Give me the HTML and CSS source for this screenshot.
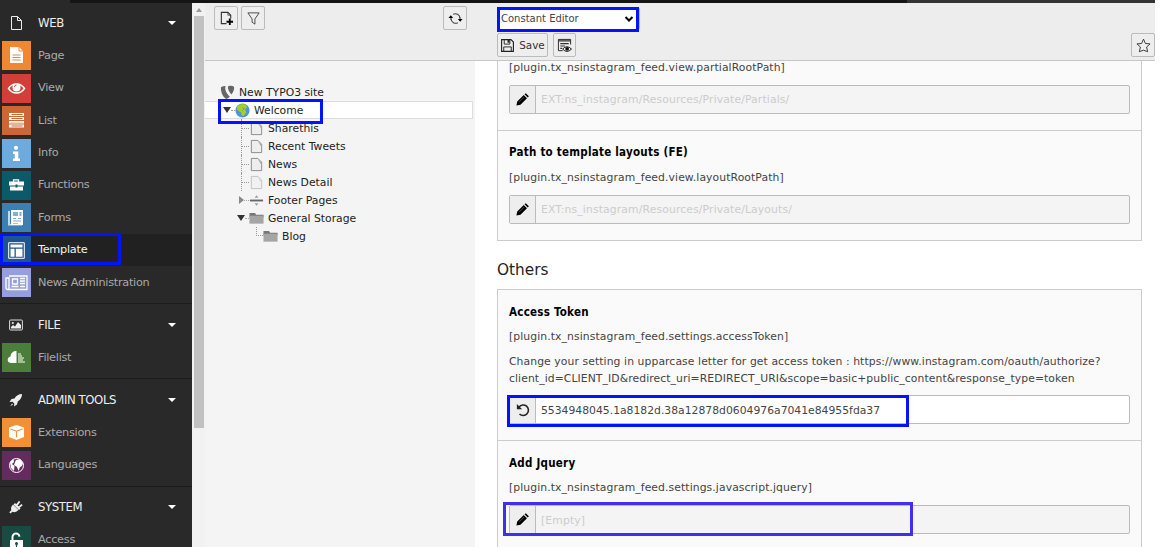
FILE: index.html
```html
<!DOCTYPE html>
<html lang="en">
<head>
<meta charset="utf-8">
<title>Template - Constant Editor</title>
<link rel="stylesheet" href="styles.css">
</head>
<body>
<div class="app">
  <div class="topbar"><span class="top-a"></span><span class="top-b"></span><span class="top-c"></span></div>
  <div class="main">
    <nav class="menu">
      <section class="group first">
        <h2 class="head"><svg class="hi" viewBox="0 0 16 16"><path d="M3.5 1.5h6l4 4v9h-10zM9.5 1.5v4h4" fill="none" stroke="#eee"/></svg><span>WEB</span><i class="caret"></i></h2>
        <a class="item"><svg class="ic page" viewBox="0 0 29 29"><path d="M8 6h9l4 4v12H8z" fill="#fff"/><path d="M17 6v4h4" fill="none" stroke="#ef8733"/><path d="M10.500 14h8M10.500 16.500h8M10.500 19h8" stroke="#ef8733"/></svg>Page</a>
        <a class="item"><svg class="ic view" viewBox="0 0 29 29"><path d="M6.500 14.500c4-6 12-6 16 0c-4 6-12 6-16 0z" fill="none" stroke="#fff" stroke-width="1.400"/><circle cx="14.500" cy="13.500" r="4" fill="#fff"/><path d="M12.500 13a2 2 0 0 1 2-2" stroke="#d13f38" fill="none"/></svg>View</a>
        <a class="item"><svg class="ic list" viewBox="0 0 29 29"><path d="M7 7h15v3H7zM7 11h15v3H7zM7 15h15v2.600H7zM7 18.600h15v3H7z" fill="#fff"/><path d="M9.500 8.500h11M9.500 12.500h11M9.500 20h11" stroke="#cb6736"/><path d="M9 16.300h12" stroke="#e6b294" stroke-width=".7"/></svg>List</a>
        <a class="item"><svg class="ic info" viewBox="0 0 29 29"><circle cx="14" cy="8.800" r="2.100" fill="#fff"/><path d="M11 12.500h5.300v7H18V22h-7v-2.500h1.800V15H11z" fill="#fff"/></svg>Info</a>
        <a class="item"><svg class="ic func" viewBox="0 0 29 29"><path d="M11.500 11V8.800h5V11" fill="none" stroke="#fff" stroke-width="1.300"/><path d="M7 10.500h15v4h-6.500v-1h-2v1H7zM8 15.500h5.500v1h2v-1h5.500v4H8z" fill="#fff"/></svg>Functions</a>
        <a class="item"><svg class="ic forms" viewBox="0 0 29 29"><path d="M6 8h2v13h12v1.500H6z" fill="#c6dbea"/><path d="M9 7h12v15H9z" fill="#fff"/><path d="M11 9h5v4h-5zM17.500 9h2v4h-2zM11 15h3v1h-3zM11 17.500h8v1h-8zM11 20h5v.8h-5zM16 15h3v1h-3z" fill="#83b0d2"/></svg>Forms</a>
        <a class="item active"><svg class="ic tmpl" viewBox="0 0 29 29"><path d="M6.700 6.700h15.600v15.600H6.700z" fill="none" stroke="#fff"/><path d="M8.500 8.500h12v3h-12zM8.500 12.800h4v8h-4zM13.800 12.800h6.700v8h-6.700z" fill="#fff"/></svg>Template</a>
        <a class="item"><svg class="ic news" viewBox="0 0 29 29"><path d="M7 8h18v13.500H6q-2 0-2-2V10h3v9.500q0 2-1 2" fill="none" stroke="#fff" stroke-width="1.300"/><path d="M10.500 11h5v5h-5zM9.500 18.500h7M18 10.500h5M18 13h5M18 15.500h5M18 18.500h5" fill="none" stroke="#fff" stroke-width="1.300"/></svg>News Administration</a>
      </section>
      <section class="group">
        <h2 class="head"><svg class="hi" viewBox="0 0 16 16"><rect x="1.600" y="3" width="12.800" height="10" rx="1" fill="none" stroke="#ddd"/><circle cx="4.800" cy="6" r="1.100" fill="#eee"/><path d="M3 11.500V10l2-2 2 1.500L10 5l3 3v3.500z" fill="#eee"/></svg><span>FILE</span><i class="caret"></i></h2>
        <a class="item"><svg class="ic files" viewBox="0 0 29 29"><path d="M14.500 8v12H9q-3.500-.5-3.300-3.500Q6 14 8.500 13.500 9 8 14.500 8z" fill="#fff"/><path d="M16 11h3M16 13h4M16 15h6M16 17h5M16 19h7" stroke="#fff" stroke-width="1.100"/></svg>Filelist</a>
      </section>
      <section class="group">
        <h2 class="head"><svg class="hi" viewBox="0 0 16 16"><path d="M14 2q-5 0-7.500 4.500L3.500 7 1.500 10l3-.3 1.800 1.800-.3 3 3-2 .8-3Q14 7 14 2zM4 11.500l-1.700 2.700L5 12.500z" fill="#eee"/></svg><span>ADMIN TOOLS</span><i class="caret"></i></h2>
        <a class="item"><svg class="ic ext" viewBox="0 0 29 29"><path d="M14.500 7l7.500 2.500v9.500l-7.500 3L7 19V9.500z" fill="#fff"/><path d="M8.500 11l6 2.200 6-2.200M14.500 13.200v6" stroke="#f29036" fill="none" stroke-width="1.100"/></svg>Extensions</a>
        <a class="item"><svg class="ic lang" viewBox="0 0 29 29"><circle cx="14.500" cy="14.500" r="7" fill="none" stroke="#fff"/><path d="M8 11l3.500-3 .5 3-2 2 2.500 2-.5 5-3-3zM14 9l4-1 3 4-1 3-2 1-1.500 4-1.500-4-3-2 1-3z" fill="#fff"/></svg>Languages</a>
      </section>
      <section class="group">
        <h2 class="head"><svg class="hi" viewBox="0 0 16 16"><path d="M5 5.500l5.500 5.500Q8 14 4.500 12.800L2.500 14.500l-1.200-1.200 2-2Q2.500 8 5 5.500zM5.500 5.500L7 4l5.500 5.500-1.500 1.500zM8 5.500L11 1.800l1.200 1.200L9.500 7zM10 8l3.500-3 1.200 1.200L11.500 9z" fill="#eee"/></svg><span>SYSTEM</span><i class="caret"></i></h2>
        <a class="item"><svg class="ic acc" viewBox="0 0 29 29"><path d="M10.500 15v-3.500a3.500 3.500 0 0 1 7-.8" fill="none" stroke="#fff" stroke-width="2"/><path d="M8 14h13v9H8z" fill="#fff"/><circle cx="14.500" cy="17.500" r="1.500" fill="#184b42"/><path d="M14.500 18v3" stroke="#184b42" stroke-width="1.200"/></svg>Access</a>
      </section>
    </nav>
    <div class="scroll"><span class="arrow"></span><span class="thumb"></span></div>
    <aside class="tree">
      <div class="tree-tools">
        <button class="btn sq"><svg viewBox="0 0 16 16"><path d="M8 13.500H2.500v-12h7l3 3V8" fill="none" stroke="#333" stroke-width="1.200"/><path d="M9.500 1.500v3h3" fill="none" stroke="#333" stroke-width=".8"/><path d="M11.500 8v7M8 11.500h7" stroke="#000" stroke-width="2"/></svg></button>
        <button class="btn sq"><svg viewBox="0 0 16 16"><path d="M2 2h12L9.500 8.500v5.500L6.500 12V8.500z" fill="none" stroke="#444"/></svg></button>
        <button class="btn sq refresh"><svg viewBox="0 0 16 16"><path d="M5.500 3.500A5 5 0 0 1 12.800 7.500M10.500 12.500A5 5 0 0 1 3.200 8.500" fill="none" stroke="#444" stroke-width="1.200"/><path d="M3.200 9V6M12.800 7v3" stroke="#333" stroke-width="1.200"/><path d="M10.500 8.500h5L13 11.500zM.5 7.500h5L3 4.500z" fill="#000"/></svg></button>
      </div>
      <div class="nodes">
        <div class="node root"><svg class="ti" viewBox="0 0 16 16"><path d="M1 2.500Q3 1 6 1 4.500 5 8 9.500q1 2 2.500 2.500-1.500 3-4 3Q2 12 1 5zM9 1q5-.5 6 1 .5 4-3 8Q9 7 8.500 3.500 8.500 1.500 9 1z" fill="#666"/></svg><span>New TYPO3 site</span></div>
        <div class="node l1 sel"><i class="down"></i><i class="dash"></i><svg class="ti" viewBox="0 0 16 16"><circle cx="8" cy="8" r="7.500" fill="#4d94e0"/><path d="M2 4Q5 0 11 1.500L13 4 11 7l1 3-3 4-2-1-.5-3L3 8 2 6z" fill="#a8cf1c"/><path d="M8 5l2 1-2 2" stroke="#4d94e0" fill="none"/></svg><span>Welcome</span></div>
        <div class="node l2"><i class="branch"></i><svg class="ti" viewBox="0 0 16 16"><path d="M2.500 1.500h7l4 4v9h-11z" fill="#eee" stroke="#888"/><path d="M9 1.500l4.500 4.500v3z" fill="#aaa"/></svg><span>Sharethis</span></div>
        <div class="node l2"><i class="branch"></i><svg class="ti" viewBox="0 0 16 16"><path d="M2.500 1.500h7l4 4v9h-11z" fill="#eee" stroke="#888"/><path d="M9 1.500l4.500 4.500v3z" fill="#aaa"/></svg><span>Recent Tweets</span></div>
        <div class="node l2"><i class="branch"></i><svg class="ti" viewBox="0 0 16 16"><path d="M2.500 1.500h7l4 4v9h-11z" fill="#eee" stroke="#888"/><path d="M9 1.500l4.500 4.500v3z" fill="#aaa"/></svg><span>News</span></div>
        <div class="node l2"><i class="branch"></i><svg class="ti faded" viewBox="0 0 16 16"><path d="M2.500 1.500h7l4 4v9h-11z" fill="#eee" stroke="#888"/><path d="M9 1.500l4.500 4.500v3z" fill="#aaa"/></svg><span>News Detail</span></div>
        <div class="node l2"><i class="right"></i><i class="dash"></i><svg class="ti" viewBox="0 0 16 16"><path d="M1 7h14v2H1z" fill="#666"/><path d="M6 5l2-2.500L10 5zM6 11l2 2.500 2-2.500z" fill="#999"/></svg><span>Footer Pages</span></div>
        <div class="node l2"><i class="down"></i><i class="dash"></i><svg class="ti" viewBox="0 0 16 16"><path d="M.5 2h6l1 2h8v3H.5z" fill="#777"/><path d="M.5 5h15v8.500H.5z" fill="#a5a5a5"/></svg><span>General Storage</span></div>
        <div class="node l3"><i class="elbow"></i><svg class="ti" viewBox="0 0 16 16"><path d="M.5 2h6l1 2h8v3H.5z" fill="#777"/><path d="M.5 5h15v8.500H.5z" fill="#a5a5a5"/></svg><span>Blog</span></div>
      </div>
    </aside>
    <main class="content">
      <header class="doc">
        <div class="select"><span>Constant Editor</span><svg viewBox="0 0 10 8"><path d="M1.500 2l3.500 3.500L8.500 2" fill="none" stroke="#000" stroke-width="2"/></svg></div>
        <div class="doc-row">
          <button class="btn save"><svg viewBox="0 0 16 16"><path d="M1.700 1.700h10l2.600 2.600v10H1.700z" fill="none" stroke="#222" stroke-width="1.200"/><path d="M4.500 2v4.500h6V2M4 14V9.500h8V14" fill="none" stroke="#222"/><path d="M8 2h2v3H8z" fill="#222"/></svg><span>Save</span></button>
          <button class="btn eye"><svg viewBox="0 0 16 16"><path d="M6 13.500H1.500v-12h13V7" fill="none" stroke="#222"/><path d="M1.500 3h13M3.500 6h9M3.500 8.500h5M3.500 11h2" stroke="#333" stroke-width="1.200"/><path d="M6 11.800q4.500-5 9.500 0-5 5-9.500 0z" fill="#eee" stroke="#111"/><circle cx="10.800" cy="11.500" r="2" fill="#111"/></svg></button>
          <button class="btn sq star"><svg viewBox="0 0 16 16"><path d="M8 1.200l2 4.600 5 .5-3.700 3.300 1.100 5L8 13l-4.400 1.600 1.100-5L1 6.300l5-.5z" fill="none" stroke="#333"/></svg></button>
        </div>
      </header>
      <div class="pane">
        <div class="card">
          <div class="field cut"><p class="key">[plugin.tx_nsinstagram_feed.view.partialRootPath]</p>
            <div class="input off"><b><svg viewBox="0 0 16 16"><path d="M.5 15.500l1-5 8-8L13.500 6.500l-8 8zM10.500 1.500L12 .200 15.800 4 14.500 5.500z" fill="#000"/><path d="M4 11l6-6" stroke="#888" stroke-width=".7"/></svg></b><span>EXT:ns_instagram/Resources/Private/Partials/</span></div></div>
          <div class="field"><h3>Path to template layouts (FE)</h3><p class="key">[plugin.tx_nsinstagram_feed.view.layoutRootPath]</p>
            <div class="input off"><b><svg viewBox="0 0 16 16"><path d="M.5 15.500l1-5 8-8L13.500 6.500l-8 8zM10.500 1.500L12 .200 15.800 4 14.500 5.500z" fill="#000"/><path d="M4 11l6-6" stroke="#888" stroke-width=".7"/></svg></b><span>EXT:ns_instagram/Resources/Private/Layouts/</span></div></div>
        </div>
        <h2 class="title">Others</h2>
        <div class="card others">
          <div class="field"><h3>Access Token</h3><p class="key">[plugin.tx_nsinstagram_feed.settings.accessToken]</p>
            <p class="desc">Change your setting in upparcase letter for get access token : https://www.instagram.com/oauth/authorize?<br>client_id=CLIENT_ID&amp;redirect_uri=REDIRECT_URI&amp;scope=basic+public_content&amp;response_type=token</p>
            <div class="input"><b><svg class="undo" viewBox="0 0 16 16"><path d="M3.500 4.500A6 6 0 1 1 4 12.500" fill="none" stroke="#222" stroke-width="1.800"/><path d="M1 1v6h6z" fill="#222"/></svg></b><span>5534948045.1a8182d.38a12878d0604976a7041e84955fda37</span></div></div>
          <div class="field"><h3>Add Jquery</h3><p class="key">[plugin.tx_nsinstagram_feed.settings.javascript.jquery]</p>
            <div class="input off"><b><svg viewBox="0 0 16 16"><path d="M.5 15.500l1-5 8-8L13.500 6.500l-8 8zM10.500 1.500L12 .200 15.800 4 14.500 5.500z" fill="#000"/><path d="M4 11l6-6" stroke="#888" stroke-width=".7"/></svg></b><span>[Empty]</span></div></div>
        </div>
      </div>
    </main>
  </div>
  <div class="mark m-template"></div>
  <div class="mark m-welcome"></div>
  <div class="mark m-select"></div>
  <div class="mark m-token"></div>
  <div class="mark m-empty"></div>
</div>
</body>
</html>
```
FILE: styles.css
```css
* { box-sizing: border-box; }
body { margin: 0; background: #fff; font: 10.8px/18px "DejaVu Sans", Verdana, sans-serif; color: #444; }
h2, h3, p { margin: 0; font-weight: normal; }
svg { display: block; flex: none; }
.app { position: relative; width: 1155px; height: 547px; overflow: hidden; display: flex; flex-direction: column; }
.topbar { display: flex; height: 3px; flex: none; }
.top-a { width: 70px; background: #292929; }
.top-b { width: 837px; background: #151515; }
.top-c { flex: 1; background: #333; }
.main { display: flex; flex: 1; min-height: 0; }

.menu { width: 192px; background: #292929; overflow: hidden; flex: none; }
.group { border-top: 1px solid #1c1c1c; padding-bottom: 4.4px; }
.group.first { border-top: 0; }
.head { display: flex; align-items: center; height: 37.3px; padding: 4px 16px 0 8px; font-size: 11.7px; letter-spacing: -.4px; color: #eee; }
.first .head { height: 36.7px; }
.hi { width: 16px; height: 16px; margin-right: 14px; }
.caret { margin-left: auto; border: 4px solid transparent; border-top-color: #fff; border-bottom: 0; }
.item { display: flex; align-items: center; gap: 7px; height: 32.4px; padding: 0 0 0 2px; font-size: 11.3px; letter-spacing: -.28px; line-height: 20px; color: #a9a9a9; }
.item.active { background: #212121; color: #f2f2f2; }
.ic { width: 29px; height: 29px; }
.page { background: #ef8733; }
.view { background: #d13f38; }
.list { background: #cb6736; }
.info { background: #6daae0; }
.func { background: #0b5a6b; }
.forms { background: #3c80b3; }
.tmpl { background: #1d5590; }
.news { background: #959fdf; }
.files { background: #4b7e38; }
.ext { background: #f29036; }
.lang { background: #642c5e; }
.acc { background: #184b42; }

.scroll { width: 13px; background: #f1f1f1; display: flex; flex-direction: column; align-items: center; flex: none; }
.arrow { margin: 5px 0 4px; border: 3.5px solid transparent; border-top: 0; border-bottom: 4px solid #999; }
.thumb { width: 10px; height: 412px; background: #c1c1c1; }

.tree { width: 270px; background: #f4f4f4; flex: none; color: #222; }
.tree-tools { display: flex; gap: 3px; height: 58px; padding: 3px 8px 0 9px; background: #ededed; border-bottom: 1px solid #c6c6c6; }
.refresh { margin-left: auto; }
.btn { display: flex; align-items: center; justify-content: center; height: 24px; padding: 0; border: 1px solid #bbb; border-radius: 2px; background: #eee; font: inherit; color: #333; }
.btn svg { width: 15px; height: 15px; }
.sq { width: 24px; }
.nodes { padding-top: 22px; }
.node { display: flex; align-items: center; height: 18px; white-space: nowrap; }
.node span { margin-left: 4px; padding-top: 2px; }
.ti { width: 15px; height: 15px; }
.faded { opacity: .45; }
.root { padding-left: 15px; }
.l1 { padding-left: 18px; }
.sel { background: #fff; border: 1px solid #ddd; border-left: 0; margin-right: 2px; }
.l2 { padding-left: 32px; }
.l3 { padding-left: 51px; }
.down { border: 4px solid transparent; border-top: 6px solid #333; border-bottom: 0; }
.right { border: 4px solid transparent; border-left: 5px solid #888; border-right: 0; margin: 0 0 0 2px; }
.dash { width: 4px; border-top: 1px dotted #aaa; }
.l2 .right + .dash { width: 5px; }
.branch { width: 8px; height: 18px; margin-left: 4px; border-left: 1px dotted #999; background: repeating-linear-gradient(90deg, #999 0 1px, transparent 1px 2px) 0 9px / 8px 1px no-repeat; }
.elbow { width: 7px; height: 9px; align-self: flex-start; border-left: 1px dotted #999; border-bottom: 1px dotted #999; }

.content { flex: 1; min-width: 0; display: flex; flex-direction: column; }
.doc { height: 58px; flex: none; padding: 4px 0 0 22px; background: #ededed; border-bottom: 1px solid #c6c6c6; }
.select { display: flex; align-items: center; justify-content: space-between; width: 143px; height: 23px; padding: 0 5px 0 3px; background: #fff; border: 1px solid #bbb; border-radius: 2px; font-size: 10px; }
.select svg { width: 10px; height: 8px; }
.doc-row { display: flex; gap: 5px; margin-top: 3px; }
.save { width: 51px; gap: 4px; font-size: 10.4px; }
.eye { width: 23px; }
.star { margin-left: auto; }
.pane { flex: 1; min-height: 0; overflow: hidden; padding: 0 13px 0 22px; }
.card { background: #fafafa; border: 1px solid #ccc; }
.card:first-child { border-top: 0; }
.field { padding: 12px 11px 16px; border-top: 1px solid #ccc; }
.field:first-child { border-top: 0; }
.field.cut { padding-top: 0; margin-top: -2px; }
.field h3 { font: bold 11.5px/18px "DejaVu Sans Condensed", "DejaVu Sans", sans-serif; font-stretch: condensed; letter-spacing: .25px; color: #000; margin-bottom: 8px; }
.key { line-height: 17px; margin-bottom: 9px; letter-spacing: .09px; }
.desc { line-height: 16.5px; margin: 0 0 8px; white-space: nowrap; letter-spacing: .085px; }
.input { display: flex; height: 29px; border: 1px solid #bbb; border-radius: 2px; background: #fff; color: #444; }
.input b { display: flex; align-items: center; justify-content: center; width: 26px; background: #eee; border-right: 1px solid #bbb; }
.input b svg { width: 13px; height: 13px; }
.input b .undo { width: 14px; height: 14px; }
.input span { padding-left: 5px; line-height: 27px; }
.others .input span { line-height: 29px; }
.others h3 { line-height: 20px; margin-bottom: 6px; }
.input.off { background: #f4f4f4; color: #ccc; letter-spacing: .13px; }
.title { height: 48px; line-height: 59px; font-size: 15.3px; color: #222; }

.mark { position: absolute; border: 3px solid #0414fa; }
.m-template { left: 0; top: 233px; width: 121px; height: 32px; }
.m-welcome { left: 218px; top: 99px; width: 105px; height: 25px; }
.m-select { left: 497px; top: 7px; width: 142px; height: 25px; }
.m-token { left: 507px; top: 395px; width: 402px; height: 32px; }
.m-empty { left: 503px; top: 502px; width: 410px; height: 34px; border-color: #4030ee; }
```
